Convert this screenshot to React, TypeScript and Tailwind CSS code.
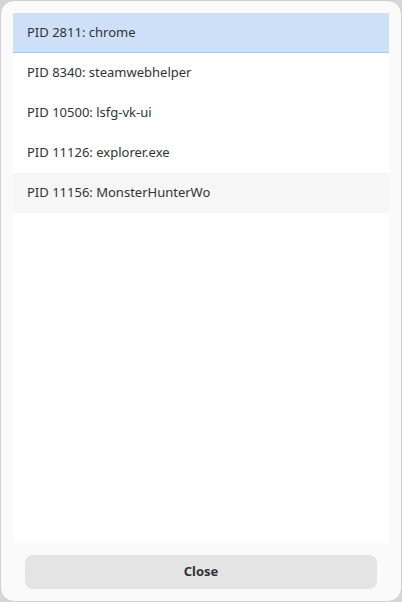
const processes = [
  { pid: 2811, name: 'chrome' },
  { pid: 8340, name: 'steamwebhelper' },
  { pid: 10500, name: 'lsfg-vk-ui' },
  { pid: 11126, name: 'explorer.exe' },
  { pid: 11156, name: 'MonsterHunterWo' },
]

export default function App() {
  const selected = 2811
  const hovered = 11156

  return (
    <div className="h-[602px] w-[402px] bg-[#d6d6d6] font-['Noto_Sans',sans-serif]">
      <div className="flex h-full w-full flex-col rounded-[14px] border border-[#cfcfcf] bg-[#fafafa] px-3 pb-3 pt-3">
        <div className="flex-1 overflow-hidden bg-white">
          {processes.map(p => (
            <div
              key={p.pid}
              className={
                p.pid === selected
                  ? 'flex h-10 items-center border-b border-[#a9c9f0] bg-[#cde0f7] px-[14px] text-[13px] text-[#2e3436]'
                  : p.pid === hovered
                    ? 'flex h-10 items-center bg-[#f6f6f6] px-[14px] text-[13px] text-[#2e3436]'
                    : 'flex h-10 items-center px-[14px] text-[13px] text-[#2e3436]'
              }
            >
              PID {p.pid}: {p.name}
            </div>
          ))}
        </div>
        <div className="px-3 pt-3">
          <button className="h-[34px] w-full rounded-lg bg-[#e4e4e4] text-[13px] font-bold text-[#2e3436]">
            Close
          </button>
        </div>
      </div>
    </div>
  )
}
